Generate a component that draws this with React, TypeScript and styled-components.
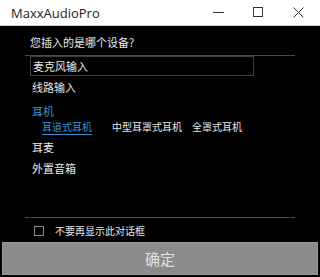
import * as React from 'react';
import styled, { createGlobalStyle } from 'styled-components';

const GlobalStyle = createGlobalStyle`
  html, body {
    margin: 0;
    padding: 0;
    background: #000;
  }
`;

const cjk = `"Noto Sans CJK SC", "Noto Sans", sans-serif`;

const StyledWindow = styled.div`
  display: flex;
  flex-direction: column;
  width: 320px;
  height: 277px;
  background: #000;
  font-family: ${cjk};
  color: #e8e8e8;
  overflow: hidden;
`;

const StyledTitleBar = styled.div`
  display: flex;
  align-items: center;
  height: 25px;
  padding: 0 2px 0 11px;
  background: #fff;
  border-bottom: 1px solid #d0d0d0;
`;

const StyledTitle = styled.div`
  flex: 1;
  font-family: 'Open Sans', 'Liberation Sans', sans-serif;
  font-size: 13px;
  color: #222;
`;

const StyledControl = styled.div`
  display: flex;
  align-items: center;
  justify-content: center;
  width: 40px;
  height: 25px;
`;

const StyledBody = styled.div`
  flex: 1;
  display: flex;
  flex-direction: column;
`;

const StyledQuestion = styled.div`
  margin: 7px 0 0 30px;
  font-size: 11px;
  line-height: 18px;
`;

const StyledRule = styled.div<{ $top: number }>`
  height: 1px;
  margin: ${(p) => p.$top}px 25px 0;
  background: #4a4a4a;
`;

const StyledInput = styled.div`
  width: 220px;
  height: 18px;
  margin-left: 30px;
  padding-left: 2px;
  border: 1px solid #3e3e3e;
  font-size: 11px;
  line-height: 18px;
  color: #ececec;
`;

const StyledOption = styled.div<{ $top: number; $active?: boolean }>`
  margin: ${(p) => p.$top}px 0 0 32px;
  font-size: 11px;
  line-height: 16px;
  color: ${(p) => (p.$active ? '#3b93d8' : '#e8e8e8')};
`;

const StyledSubRow = styled.div`
  display: flex;
  margin-left: 42px;
  font-size: 10px;
  line-height: 16px;
`;

const StyledSubOption = styled.span<{ $width: number; $active?: boolean }>`
  width: ${(p) => p.$width}px;
  color: ${(p) => (p.$active ? '#3b93d8' : '#e8e8e8')};
  span {
    border-bottom: ${(p) => (p.$active ? '1px solid #3b93d8' : 'none')};
  }
`;

const StyledCheckRow = styled.div`
  display: flex;
  align-items: center;
  gap: 11px;
  height: 23px;
  padding: 1px 0 0 34px;
  font-size: 10px;
`;

const StyledCheckbox = styled.div`
  width: 8px;
  height: 8px;
  border: 1px solid #8a8a8a;
`;

const StyledButton = styled.div`
  display: flex;
  align-items: center;
  justify-content: center;
  height: 31px;
  margin: 0 2px 2px;
  background: #8b8b8b;
  border: 1px solid #9a9a9a;
  font-size: 15px;
  color: #e2e2e2;
`;

const App: React.FC = () => (
  <StyledWindow>
    <GlobalStyle />
    <StyledTitleBar>
      <StyledTitle>MaxxAudioPro</StyledTitle>
      <StyledControl>
        <svg width="11" height="11" viewBox="0 0 11 11">
          <line x1="0" y1="5.5" x2="11" y2="5.5" stroke="#333" strokeWidth="1" />
        </svg>
      </StyledControl>
      <StyledControl>
        <svg width="11" height="11" viewBox="0 0 11 11">
          <rect x="0.5" y="0.5" width="9" height="9" fill="none" stroke="#333" strokeWidth="1" />
        </svg>
      </StyledControl>
      <StyledControl>
        <svg width="11" height="11" viewBox="0 0 11 11">
          <path d="M0.5 0.5 L10.5 10.5 M10.5 0.5 L0.5 10.5" stroke="#333" strokeWidth="1" />
        </svg>
      </StyledControl>
    </StyledTitleBar>
    <StyledBody>
      <StyledQuestion>您插入的是哪个设备?</StyledQuestion>
      <StyledRule $top={4} />
      <StyledInput>麦克风输入</StyledInput>
      <StyledOption $top={3}>线路输入</StyledOption>
      <StyledOption $top={8} $active>
        耳机
      </StyledOption>
      <StyledSubRow>
        <StyledSubOption $width={70} $active>
          <span>耳道式耳机</span>
        </StyledSubOption>
        <StyledSubOption $width={80}>中型耳罩式耳机</StyledSubOption>
        <StyledSubOption $width={60}>全罩式耳机</StyledSubOption>
      </StyledSubRow>
      <StyledOption $top={4}>耳麦</StyledOption>
      <StyledOption $top={5}>外置音箱</StyledOption>
    </StyledBody>
    <StyledRule $top={0} />
    <StyledCheckRow>
      <StyledCheckbox />
      不要再显示此对话框
    </StyledCheckRow>
    <StyledButton>确定</StyledButton>
  </StyledWindow>
);

export default App;
